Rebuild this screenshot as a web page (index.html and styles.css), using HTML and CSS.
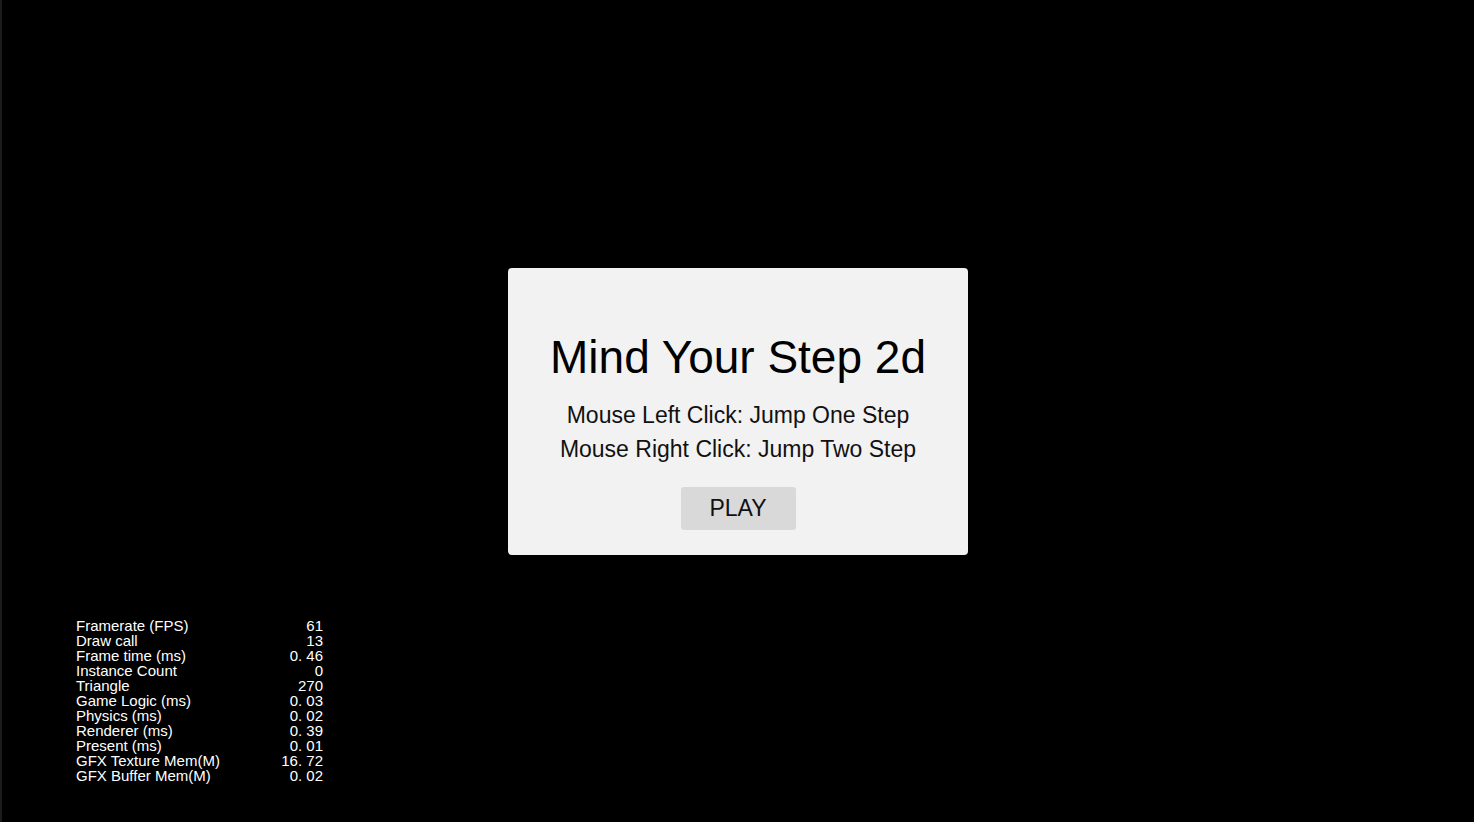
FILE: index.html
```html
<!DOCTYPE html>
<html>
<head>
<meta charset="utf-8">
<link rel="stylesheet" href="styles.css">
</head>
<body>
<div class="stage">
  <div class="dialog">
    <div class="title">Mind Your Step 2d</div>
    <div class="help">
      <div class="line">Mouse Left Click: Jump One Step</div>
      <div class="line">Mouse Right Click: Jump Two Step</div>
    </div>
    <div class="play">PLAY</div>
  </div>
  <div class="stats">
    <span>Framerate (FPS)</span><span class="v">61</span>
    <span>Draw call</span><span class="v">13</span>
    <span>Frame time (ms)</span><span class="v">0. 46</span>
    <span>Instance Count</span><span class="v">0</span>
    <span>Triangle</span><span class="v">270</span>
    <span>Game Logic (ms)</span><span class="v">0. 03</span>
    <span>Physics (ms)</span><span class="v">0. 02</span>
    <span>Renderer (ms)</span><span class="v">0. 39</span>
    <span>Present (ms)</span><span class="v">0. 01</span>
    <span>GFX Texture Mem(M)</span><span class="v">16. 72</span>
    <span>GFX Buffer Mem(M)</span><span class="v">0. 02</span>
  </div>
</div>
</body>
</html>
```
FILE: styles.css
```css
html, body {
  margin: 0;
  padding: 0;
  background: #000;
}
body {
  font-family: "Liberation Sans", Arial, sans-serif;
}
.stage {
  position: relative;
  width: 1474px;
  height: 822px;
  box-sizing: border-box;
  border-left: 2px solid #1c1c1c;
  display: flex;
  align-items: center;
  justify-content: center;
  overflow: hidden;
}
.dialog {
  width: 460px;
  height: 287px;
  box-sizing: border-box;
  background: #f2f2f2;
  border-radius: 4px;
  display: flex;
  flex-direction: column;
  align-items: center;
  padding-top: 64px;
}
.title {
  font-size: 46px;
  line-height: 50px;
  color: #000;
}
.help {
  margin-top: 16px;
  display: flex;
  flex-direction: column;
  align-items: center;
}
.line {
  font-size: 23px;
  line-height: 34px;
  color: #111;
}
.play {
  margin-top: 21px;
  width: 115px;
  height: 43px;
  background: #d9d9d9;
  border-radius: 3px;
  font-size: 23px;
  line-height: 43px;
  text-align: center;
  color: #111;
}
.stats {
  position: absolute;
  left: 74px;
  top: 618px;
  width: 247px;
  display: grid;
  grid-template-columns: 1fr auto;
  font-size: 15px;
  line-height: 15px;
  color: #fff;
}
.stats .v {
  text-align: right;
}
```
